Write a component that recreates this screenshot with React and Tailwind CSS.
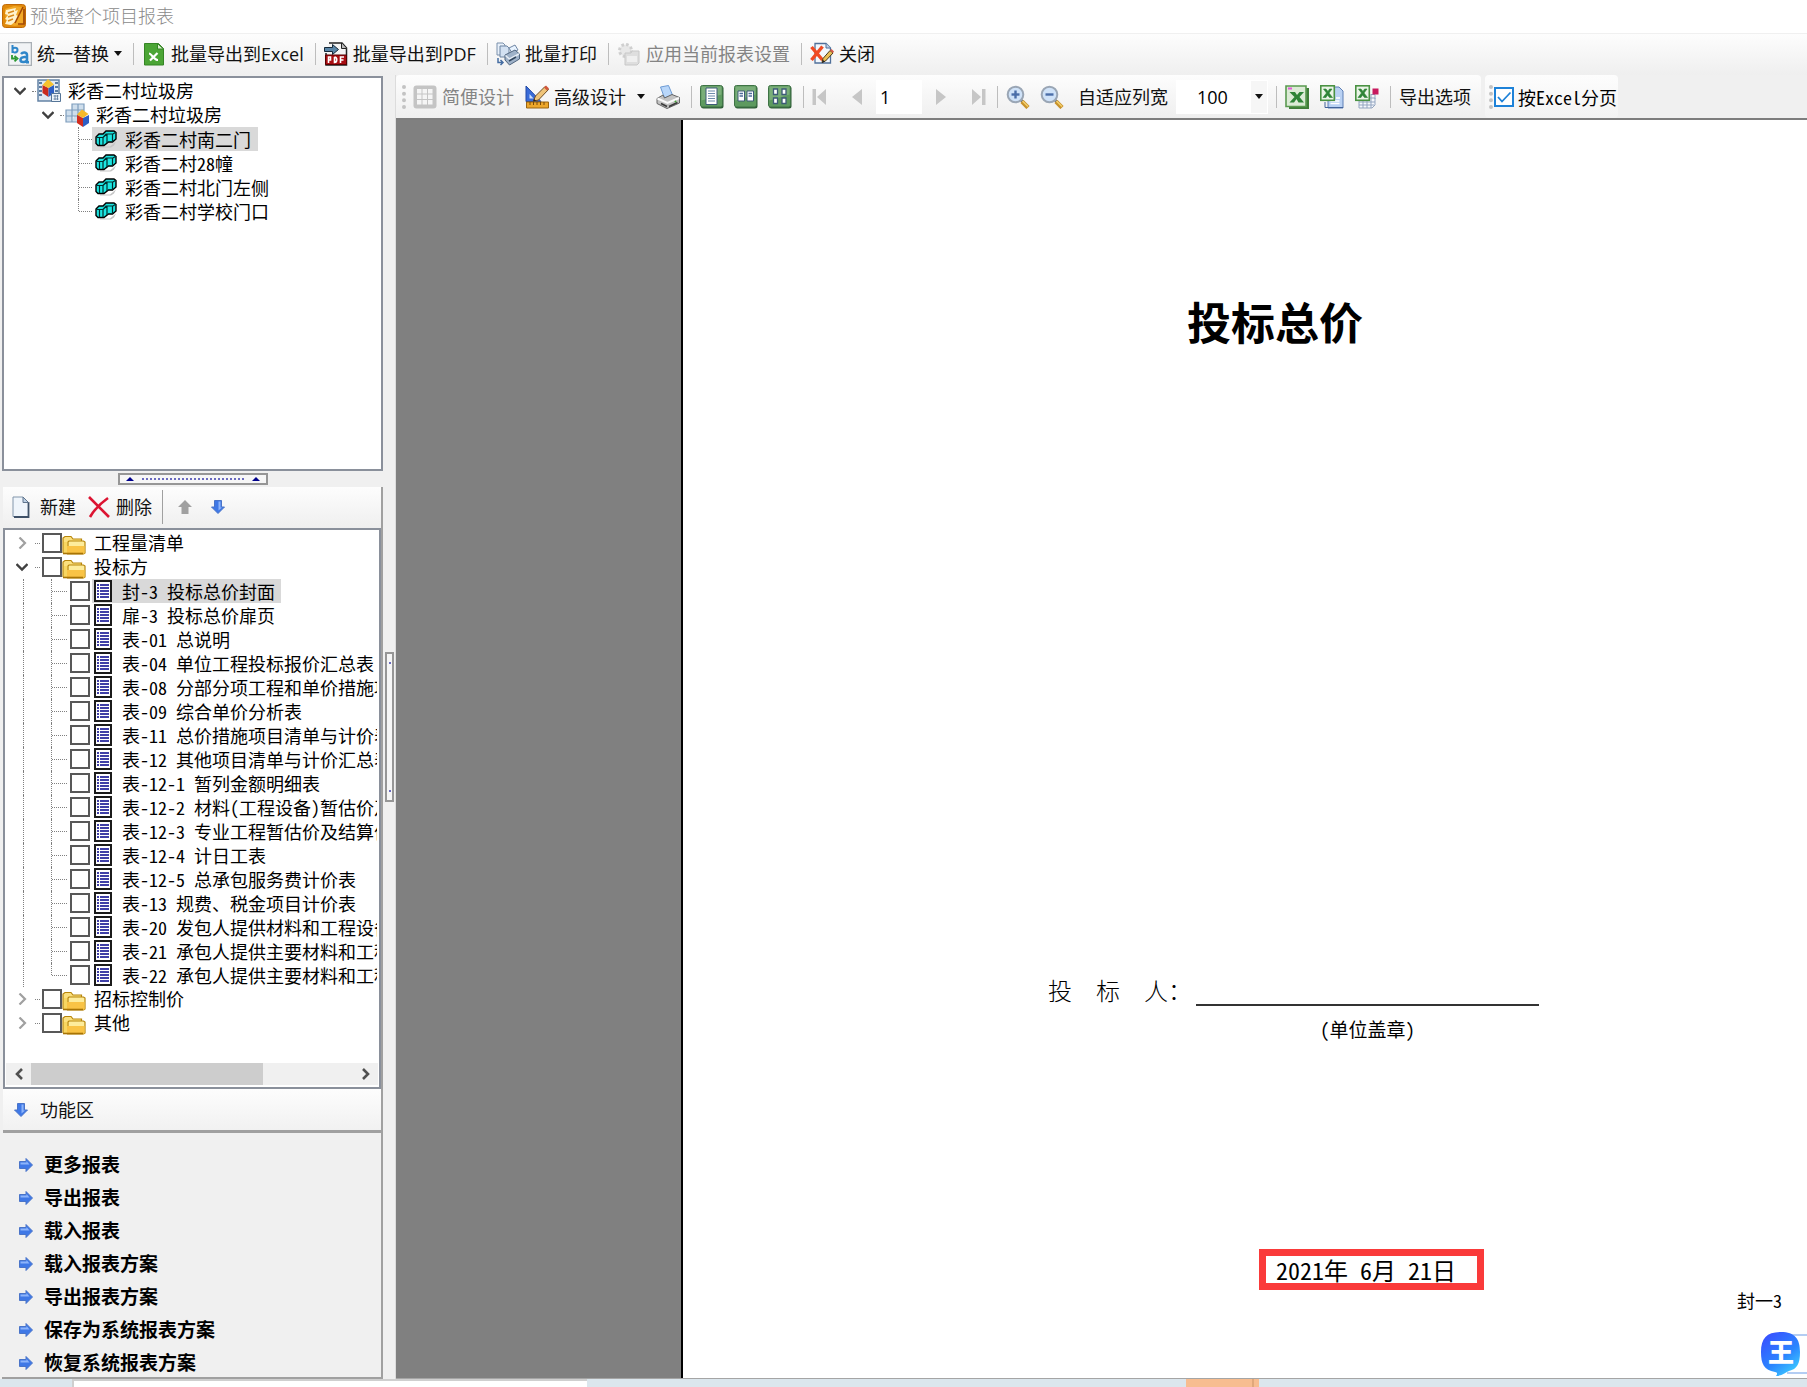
import React from "react";
import clsx from "clsx";

// --- Data ---
const rooms = ["彩香二村南二门", "彩香二村28幢", "彩香二村北门左侧", "彩香二村学校门口"];

const bidderReports = [
    "封-3 投标总价封面",
    "扉-3 投标总价扉页",
    "表-01 总说明",
    "表-04 单位工程投标报价汇总表",
    "表-08 分部分项工程和单价措施项目",
    "表-09 综合单价分析表",
    "表-11 总价措施项目清单与计价表",
    "表-12 其他项目清单与计价汇总表",
    "表-12-1 暂列金额明细表",
    "表-12-2 材料(工程设备)暂估价及",
    "表-12-3 专业工程暂估价及结算价",
    "表-12-4 计日工表",
    "表-12-5 总承包服务费计价表",
    "表-13 规费、税金项目计价表",
    "表-20 发包人提供材料和工程设备",
    "表-21 承包人提供主要材料和工程",
    "表-22 承包人提供主要材料和工程",
];

const actions = [
    "更多报表",
    "导出报表",
    "载入报表",
    "载入报表方案",
    "导出报表方案",
    "保存为系统报表方案",
    "恢复系统报表方案",
];

// Half-width characters take exactly half of a Chinese character
const HalfWidth = ({ text }) => (
    <span className="font-['Noto_Sans_Mono_CJK_SC','Noto_Sans_CJK_SC',monospace] whitespace-pre">{text}</span>
);

// --- Icons ---
const Svg = ({ className = "size-6", box = "0 0 24 24", children }) => (
    <svg viewBox={box} className={clsx("shrink-0", className)} aria-hidden="true">
        {children}
    </svg>
);

const LogoIcon = () => (
    <Svg>
        <rect x="0.5" y="0.5" width="23" height="23" rx="3" fill="#e08a0b" stroke="#c26a06" />
        <path d="M3 5l9-3 9 1v17l-8 2-9-2z" fill="#f2a928" />
        <path d="M4 6l10-2-1 3 3-1-2 5 2 1-2 5-5 4-6-1 2-4-2-1 3-4-3-1z" fill="#fff3cf" />
        <path d="M6 9l6-2M6 13l6-2M6 17l5-2" stroke="#d98a1c" strokeWidth="1.500" />
        <path d="M21 3l-8 16M22 5v15h-6" stroke="#a24806" strokeWidth="1.600" fill="none" />
    </Svg>
);

const ReplaceIcon = () => (
    <Svg>
        <rect x="0.5" y="0.5" width="23" height="23" fill="#f1f3f5" stroke="#a9afb5" strokeWidth="1.5" />
        <path d="M4.500 3v8M4.500 8c0-3 5-3 5 0s-5 3.500-5 0" stroke="#2f86c9" strokeWidth="2" fill="none" />
        <path d="M13 12c2-2.500 6-2 6 1v7M19 15.500c-3-1-6.500 0-6.500 2.500s5 3 6.500 0M18 20.200h3" stroke="#2f86c9" strokeWidth="2.500" fill="none" />
        <path d="M4 13v3.500h4M6.500 14l3 2.500-3 2.800" stroke="#2d9a32" strokeWidth="1.800" fill="none" />
    </Svg>
);

const ExcelFileIcon = () => (
    <Svg>
        <path d="M2.500 1.500h14l5 5V23h-19z" fill="#4ba535" stroke="#358525" />
        <path d="M15.500 1.500V7h6z" fill="#d8f0cd" stroke="#358525" />
        <path d="M7 11.500c2.500 0 5 6.500 9 6.500M15.500 11l-7.500 7.500" stroke="#fff" strokeWidth="2.200" fill="none" />
    </Svg>
);

const PdfIcon = () => (
    <Svg>
        <path d="M5 1h13l4.500 5v17H2V11" fill="#f4f4f4" stroke="#222" strokeWidth="1.500" />
        <path d="M17.500 1v5.500h5" fill="#bbb" stroke="#222" />
        <path d="M0.500 5.500h8V2.500l6 5-6 5V9.500h-8z" fill="#5a86a8" stroke="#152838" />
        <path d="M1.500 13h21v9.500h-21z" fill="#a80d12" stroke="#500" />
        <path d="M4.500 21v-6h2v3h-2M10.500 15v5.500c3 0 3-5.500 0-5.500M16.500 21v-6h3.500M16.500 18h3" stroke="#fff" strokeWidth="1.600" fill="none" />
    </Svg>
);

const BatchPrintIcon = () => (
    <Svg>
        <path d="M1 1h6l2 2v10H1z" fill="#e8f0fa" stroke="#7b90ab" />
        <path d="M4 4h7l2 2v9H4z" fill="#d3e1f2" stroke="#6d84a1" />
        <path d="M13 6l6-3 3 5-6 3z" fill="#e8f3ff" stroke="#6f86a4" />
        <path d="M9 13l10-5 4.500 4v5l-10 6L9 18z" fill="#9fb2c9" stroke="#50657f" />
        <path d="M9.500 13.500l4 3.500 9.500-5" stroke="#e6edf5" strokeWidth="1.500" fill="none" />
        <path d="M13 19l7-4" stroke="#33475f" strokeWidth="1.500" />
        <path d="M2 16v4.500h4M4.500 18l2.500 2.500L4.500 23" stroke="#456da2" strokeWidth="1.500" fill="none" />
    </Svg>
);

const ApplyIcon = () => (
    <Svg>
        <circle cx="8.500" cy="8.500" r="6" fill="#e8e8e8" stroke="#cfcfcf" strokeWidth="3" strokeDasharray="2.500 2.200" />
        <path d="M8 11h6l1-2h7v12l-2 2H8z" fill="#dedede" stroke="#c8c8c8" />
        <path d="M10 14h10v6H10z" fill="#efefef" />
    </Svg>
);

const CloseIcon = () => (
    <Svg>
        <path d="M5 1.500h11l4.500 4.500v15H5z" fill="#f3f7fc" stroke="#50709a" strokeWidth="1.300" />
        <path d="M16 1.500V6h4.500" fill="#bdd0e8" stroke="#50709a" />
        <path d="M1.500 5l11 13M12.500 4.500L1.500 18" stroke="#f04a22" strokeWidth="3.400" />
        <path d="M12 20.500l1-4 7-8 3 2.500-7.500 8z" fill="#e9be55" stroke="#4d3b18" />
        <path d="M12 21l1-3 2 1.500z" fill="#222" />
        <path d="M20 8.500l3 2.500 1-1.500-2.500-2.500z" fill="#d85b48" />
    </Svg>
);

const GridIcon = () => (
    <Svg>
        <rect x="0.500" y="0.500" width="23" height="23" rx="3" fill="#c4c4c4" />
        {[4, 9.5, 15].map((y) =>
            [4, 9.5, 15].map((x) => <rect key={x + "-" + y} x={x} y={y} width="4.500" height="4.500" fill="#f5f5f5" />)
        )}
    </Svg>
);

const RulerIcon = () => (
    <Svg>
        <path d="M1 1l15 15.500H1z" fill="#3a6cd8" stroke="#2149a6" />
        <path d="M4.500 9l4 4.500h-4z" fill="#cfe0fb" />
        <path d="M8.500 16l2-5L20 1.500l3.500 3L13.500 15z" fill="#efc479" stroke="#6d4d25" />
        <path d="M19 2.500l2-2 3 3-2 2z" fill="#d0553b" />
        <path d="M8 17l1-3 2 1.500z" fill="#222" />
        <path d="M1.500 17h22v6h-22z" fill="#eda72b" stroke="#9a6410" />
        <path d="M5 17v3M8.500 17v3M12 17v3M15.500 17v3M19 17v3" stroke="#7a4a08" />
    </Svg>
);

const PrinterIcon = () => (
    <Svg>
        <path d="M4.500 2l8-1.500L16.500 10l-8 3z" fill="#b9d7fa" stroke="#6d9bd4" />
        <path d="M1 13.500L7 10l1.500 3 7.500-3.500 7.500 3V18L11 23.500 1 18.500z" fill="#c3c3c3" stroke="#666" />
        <path d="M1.500 13.500l10 4.500 11.500-5" fill="none" stroke="#fafafa" strokeWidth="2" />
        <path d="M5 18.500l6 3M13 21.500l8.500-4" stroke="#3c3c3c" strokeWidth="1.800" />
        <circle cx="19.500" cy="16.500" r="1" fill="#48a63a" />
    </Svg>
);

// Green tile shared by the page layout buttons
const PageTile = ({ children }) => (
    <Svg>
        <rect x="1" y="1" width="22.500" height="22.500" rx="2.500" fill="#2c5c34" />
        <rect x="0.500" y="0.500" width="22" height="21.500" rx="2" fill="#5d9a5f" stroke="#3f7346" />
        <path d="M1.500 1.500h20v8l-20 6z" fill="#8dbd8b" opacity="0.600" />
        {children}
    </Svg>
);

const OnePageIcon = () => (
    <PageTile>
        <path d="M6 3h11v16.500H6z" fill="#fff" stroke="#3d5b78" />
        <path d="M8 6h7M8 8.500h7M8 11h7M8 13.500h7M8 16h7" stroke="#6d8bab" />
    </PageTile>
);

const TwoPageIcon = () => (
    <PageTile>
        <path d="M4 6h6.500v10H4zM13 6h6.500v10H13z" fill="#fff" stroke="#3d5b78" />
        <path d="M5.500 8.500H9M5.500 11H9M14.500 8.500H18M14.500 11H18" stroke="#4d6d9a" strokeWidth="1.300" />
    </PageTile>
);

const FourPageIcon = () => (
    <PageTile>
        <path d="M5.500 4h4v5.500h-4zM14 4h4v5.500h-4zM5.500 13h4v5.500h-4zM14 13h4v5.500h-4z" fill="#fff" stroke="#3d5b78" strokeWidth="1.300" />
    </PageTile>
);

const Magnifier = ({ plus }) => (
    <Svg>
        <path d="M14 14l4 4" stroke="#777" strokeWidth="3" />
        <path d="M16 16.500l6 6" stroke="#c8922c" strokeWidth="4.500" />
        <path d="M16.500 16l5.500 5.500" stroke="#f3d06c" strokeWidth="1.500" />
        <circle cx="9.500" cy="9.500" r="7.800" fill="#cfe2f8" stroke="#9aa6b5" strokeWidth="2" />
        <path d="M5.500 9.500h8" stroke="#4a6ea8" strokeWidth="2.400" />
        {plus && <path d="M9.500 5.500v8" stroke="#4a6ea8" strokeWidth="2.400" />}
    </Svg>
);

const ExcelIcon = () => (
    <Svg>
        <path d="M4 3h20v21H4z" fill="#3f7d38" />
        <path d="M1 1h20v20.500H1z" fill="#dcebd6" stroke="#5a9a50" strokeWidth="1.600" />
        <path d="M4.500 7H10l2 3 2.500-3H19l-4.500 5 4.500 5.500h-5.500L11.500 14 9 17.500H4.500l5-5.500z" fill="#2f8437" />
        <path d="M3 3.500h4" stroke="#e45ad8" strokeWidth="2" />
    </Svg>
);

const SmallExcel = () => (
    <>
        <rect x="0.800" y="0.800" width="13.500" height="14.500" fill="#eaf4e7" stroke="#4a9243" strokeWidth="1.600" />
        <path d="M3.500 4H6l2 2.500L9.500 4H12L9 8l3.500 4.500H9.500L7.500 10 6 12.500H3L6.500 8z" fill="#2f8437" stroke="#2f8437" strokeWidth="0.600" />
    </>
);

const ExcelPageIcon = () => (
    <Svg>
        <path d="M8 2h11l4 4v17H8z" fill="#b9d1f3" stroke="#5d7fb5" />
        <path d="M10.500 16h9M10.500 18.500h9M16 13h4" stroke="#fff" strokeWidth="1.500" />
        <path d="M5 17v5.500h18" stroke="#40629a" fill="none" />
        <SmallExcel />
    </Svg>
);

const ExcelGridIcon = () => (
    <Svg>
        <path d="M4 13h16v7l-3 3H4zM4 17h16M4 20h15M8 13v10M12 13v10M16 9v14M16 9.500h4V14" fill="#f5f8fc" stroke="#93a5c0" />
        <SmallExcel />
        <rect x="17.500" y="3.500" width="6" height="6" fill="#c81a5e" />
    </Svg>
);

const ProjectIcon = () => (
    <Svg>
        <path d="M1 1h21v21H1z" fill="#dfe8f2" stroke="#6483a5" strokeWidth="1.500" />
        <path d="M2 4h3M2 8h3M2 12h3M2 16h3M18 4h3M18 8h3M18 12h3" stroke="#5b7ca3" strokeWidth="2" />
        <path d="M5.500 6v8l6 4V9z" fill="#c92a1f" />
        <path d="M17 6v8l-5.500 4V9z" fill="#2e5fc4" />
        <path d="M11 0l6 5.500-5.500 3.500-6-3z" fill="#f6c12e" />
        <path d="M14.500 14.500h9v8h-9z" fill="#eef4fa" stroke="#557597" />
        <path d="M16.500 17h5M16.500 20h5M18 16v5M20.500 16v5" stroke="#557597" strokeWidth="0.800" />
    </Svg>
);

const BuildingIcon = () => (
    <Svg>
        <path d="M1 7h6V1h12v12H7v6H1zM7 7h12M7 7v6M13 1v18H7M1 13h12" fill="#cfdeec" stroke="#7e9dbd" strokeWidth="1.200" />
        <path d="M12 12v8l6 4v-9z" fill="#d22c1e" />
        <path d="M24 12v8l-6 4v-9z" fill="#2e5fc4" />
        <path d="M17 6.500l6.500 4.500-5.500 4-6-3.500z" fill="#f5b929" />
    </Svg>
);

const CubesIcon = () => (
    <Svg className="h-5 w-[22px]" box="0 0 22 20">
        <path d="M5 17.500h10l6-5-2 4-3 2H5z" fill="#c5c5c5" />
        <path d="M1 8l3-3h4l3-3h8l2 1.500V10l-3.500 3h-4L9 16.500H3L1 14.500z" fill="#1ce6e2" stroke="#000" strokeWidth="1.400" />
        <path d="M1.500 8.500H8l3-3.500h7M8 8.500V16M12 5v9M17.500 5.500V13M4.500 9v7M18 5l3-2M8 8.500L11.500 5" stroke="#022f2f" strokeWidth="1.200" fill="none" />
    </Svg>
);

const FolderIcon = () => (
    <Svg>
        <path d="M1 20V5L3 3.500h6L11 6h8.500v4" fill="#fbe07e" stroke="#b8860b" strokeWidth="1.200" />
        <path d="M6 20.500V9L7 8h14.500L23 9v11l-1.500 1H5z" fill="#fdec9c" stroke="#b8860b" strokeWidth="1.200" />
        <path d="M2 20.500V9h3v11.500z" fill="#f7d661" />
        <path d="M5 13h17.500v7.500H5z" fill="#f9c345" />
        <path d="M1 20.500h20" stroke="#a87405" strokeWidth="1.600" />
    </Svg>
);

const ReportIcon = () => (
    <Svg className="h-[22px] w-[18px]" box="0 0 18 22">
        <rect x="1" y="1" width="16" height="20" fill="#fff" stroke="#1b1b1b" strokeWidth="2" />
        <path d="M3 5h2M3 8h2M3 11h2M3 14h2M3 17h2M6 5h9M6 8h9M6 11h9M6 14h9M6 17h9" stroke="#00008b" strokeWidth="1.500" />
    </Svg>
);

const NewFileIcon = () => (
    <Svg className="h-6 w-[18px]" box="0 0 18 24">
        <path d="M1 2h10l5.500 5.500v14H1z" fill="#eff5fb" stroke="#8296ab" />
        <path d="M16.500 7v15H2" stroke="#3e5168" strokeWidth="1.800" fill="none" />
        <path d="M11 2v5.500h5.500z" fill="#bdd0e4" stroke="#60758d" />
    </Svg>
);

const DeleteIcon = () => (
    <Svg>
        <path d="M2 2c6 6 13 13 20 20M21 3C14 8 7 15 3 22" stroke="#dc1432" strokeWidth="2.600" fill="none" />
    </Svg>
);

const BlueArrow = ({ className }) => (
    <Svg className={clsx("size-[14px]", className)} box="0 0 14 14">
        <path d="M0.500 3.500H7V0.500L13.500 7 7 13.500v-3H0.500z" fill="#3f78e6" stroke="#4a74c8" />
        <path d="M1.500 4.500h6V3l3 3.500h-9z" fill="#8db4fa" />
    </Svg>
);

const Caret = () => (
    <Svg className="h-[5px] w-2" box="0 0 8 5">
        <path d="M0 0h8L4 5z" fill="#111" />
    </Svg>
);

const Expander = ({ open, className }) => (
    <Svg className={clsx("size-3", className)} box="0 0 12 12">
        {open ? (
            <path d="M0.500 3L6 8.500 11.500 3" stroke="#404040" strokeWidth="2.400" fill="none" />
        ) : (
            <path d="M3.500 0.500L9 6l-5.500 5.500" stroke="#a0a0a0" strokeWidth="2.200" fill="none" />
        )}
    </Svg>
);

// --- Toolbar parts ---
const Separator = () => <span className="mr-2 ml-[11px] h-[22px] w-px shrink-0 bg-[#bdbdbd]" />;

const Grip = () => <span className="h-6 w-0 shrink-0 border-l-4 border-dotted border-[#c3c3c3]" />;

const ToolButton = ({ icon, label, disabled, caret }) => (
    <button
        type="button"
        disabled={disabled}
        className={clsx("flex shrink-0 items-center gap-[5px] whitespace-nowrap", disabled ? "text-[#848484]" : "text-[#111]")}
    >
        {icon}
        {label}
        {caret && <Caret />}
    </button>
);

const IconButton = ({ label, disabled, children }) => (
    <button type="button" aria-label={label} disabled={disabled} className="flex shrink-0 items-center justify-center">
        {children}
    </button>
);

const NavArrow = ({ back, edge }) => (
    <Svg className="h-5 w-[14px]" box="0 0 14 20">
        <g fill="#c6c6c6" transform={back ? "translate(14 0) scale(-1 1)" : undefined}>
            <path d={edge ? "M0 2l9 8-9 8z" : "M2 2l10 8-10 8z"} />
            {edge && <path d="M10 2h3.500v16H10z" />}
        </g>
    </Svg>
);

const TreeCheckbox = ({ label }) => (
    <input
        type="checkbox"
        aria-label={label}
        className="size-5 shrink-0 appearance-none border-2 border-[#585858] bg-white"
    />
);

const Dots = ({ className }) => <span className={clsx("shrink-0 border-t border-dotted border-[#808080]", className)} />;

const MainToolbar = () => (
    <div className="flex h-[41px] shrink-0 items-center bg-linear-to-b from-[#fdfdfd] to-[#efefef] pb-0.5 pl-2">
        <ToolButton icon={<ReplaceIcon />} label="统一替换" caret />
        <Separator />
        <ToolButton icon={<ExcelFileIcon />} label="批量导出到Excel" />
        <Separator />
        <ToolButton icon={<PdfIcon />} label="批量导出到PDF" />
        <Separator />
        <ToolButton icon={<BatchPrintIcon />} label="批量打印" />
        <Separator />
        <ToolButton icon={<ApplyIcon />} label="应用当前报表设置" disabled />
        <Separator />
        <ToolButton icon={<CloseIcon />} label="关闭" />
    </div>
);

const PreviewToolbar = () => (
    <div className="flex h-[45px] shrink-0 gap-1 border-b-2 border-[#7d7d7d] bg-[#f0f0f0]">
        <div className="flex items-center rounded bg-linear-to-b from-[#fdfdfd] to-[#efefef] pr-[10px] pl-[6px]">
            <Grip />
            <div className="flex items-center gap-[11px] pl-[7px]">
                <ToolButton icon={<GridIcon />} label="简便设计" disabled />
                <ToolButton icon={<RulerIcon />} label="高级设计" />
                <IconButton label="设计选项">
                    <Caret />
                </IconButton>
                <IconButton label="打印">
                    <PrinterIcon />
                </IconButton>
            </div>
            <Separator />
            <div className="flex items-center gap-[10px]">
                <IconButton label="单页">
                    <OnePageIcon />
                </IconButton>
                <IconButton label="双页">
                    <TwoPageIcon />
                </IconButton>
                <IconButton label="四页">
                    <FourPageIcon />
                </IconButton>
            </div>
            <Separator />
            <div className="flex items-center gap-3">
                <div className="flex items-center gap-6">
                    <IconButton label="首页" disabled>
                        <NavArrow back edge />
                    </IconButton>
                    <IconButton label="上一页" disabled>
                        <NavArrow back />
                    </IconButton>
                </div>
                <input aria-label="页码" defaultValue="1" className="h-[34px] w-[46px] bg-white pl-1 outline-none" />
                <div className="flex items-center gap-6">
                    <IconButton label="下一页" disabled>
                        <NavArrow />
                    </IconButton>
                    <IconButton label="末页" disabled>
                        <NavArrow edge />
                    </IconButton>
                </div>
            </div>
            <Separator />
            <div className="flex items-center gap-[10px]">
                <IconButton label="放大">
                    <Magnifier plus />
                </IconButton>
                <IconButton label="缩小">
                    <Magnifier />
                </IconButton>
            </div>
            <div className="flex items-center gap-2 pl-[14px]">
                <ToolButton label="自适应列宽" />
                <div className="relative">
                    <select
                        aria-label="缩放比例"
                        defaultValue="100"
                        className="h-[34px] w-[92px] appearance-none bg-white pl-[21px] outline-none"
                    >
                        <option>50</option>
                        <option>100</option>
                        <option>200</option>
                    </select>
                    <span className="pointer-events-none absolute inset-y-px right-px flex w-4 items-center justify-center bg-[#f6f6f6]">
                        <Caret />
                    </span>
                </div>
            </div>
            <span className="mx-2 h-[22px] w-px shrink-0 bg-[#bdbdbd]" />
            <div className="flex items-center gap-[11px]">
                <IconButton label="导出Excel">
                    <ExcelIcon />
                </IconButton>
                <IconButton label="导出Excel文件">
                    <ExcelPageIcon />
                </IconButton>
                <IconButton label="导出到表格">
                    <ExcelGridIcon />
                </IconButton>
            </div>
            <Separator />
            <ToolButton label="导出选项" />
        </div>
        <div className="flex items-center rounded bg-linear-to-b from-[#fdfdfd] to-[#f3f3f3] pr-px pl-1">
            <Grip />
            <label className="flex items-center gap-1 pl-px whitespace-nowrap text-black">
                <span className="relative flex">
                    <input
                        type="checkbox"
                        defaultChecked
                        className="peer size-5 appearance-none border-2 border-[#1e82d8] bg-white"
                    />
                    <svg
                        viewBox="0 0 20 20"
                        className="pointer-events-none absolute inset-0 hidden size-5 peer-checked:block"
                        aria-hidden="true"
                    >
                        <path d="M4 10l4 4.500L16.500 5.500" stroke="#1e82d8" strokeWidth="1.800" fill="none" />
                    </svg>
                </span>
                <HalfWidth text="按Excel分页" />
            </label>
        </div>
    </div>
);

const ProjectTree = () => (
    <div className="h-[395px] shrink-0 overflow-hidden border-2 border-[#8a909b] bg-white pt-px text-black">
        <div className="flex h-6 items-center">
            <Expander open className="mr-[5px] ml-[10px]" />
            <Dots className="mr-px ml-px w-1" />
            <ProjectIcon />
            <span className="pl-[7px]">彩香二村垃圾房</span>
        </div>
        <div className="flex h-6 items-center">
            <Expander open className="mr-[5px] ml-[38px]" />
            <Dots className="mr-px ml-px w-1" />
            <BuildingIcon />
            <span className="pl-[7px]">彩香二村垃圾房</span>
        </div>
        {rooms.map((room, i) => (
            <div key={room} className="flex h-6 items-center pl-[74px]">
                <span
                    className={clsx(
                        "self-start border-l border-dotted border-[#808080]",
                        i === rooms.length - 1 ? "h-3" : "h-6"
                    )}
                />
                <Dots className="w-[13px]" />
                <span className={clsx("flex h-6 items-center gap-2 pr-[7px] pl-[3px]", i === 0 && "bg-[#d9d9d9]")}>
                    <CubesIcon />
                    <HalfWidth text={room} />
                </span>
            </div>
        ))}
    </div>
);

const FolderRow = ({ label, open }) => (
    <div className="flex h-6 items-center">
        <Expander open={open} className="mr-[7px] ml-[11px]" />
        <Dots className="mr-0.5 w-[5px]" />
        <TreeCheckbox label={label} />
        <span className="pt-1">
            <FolderIcon />
        </span>
        <span className="pl-2">{label}</span>
    </div>
);

const ReportTree = () => (
    <div className="flex min-h-0 flex-1 flex-col border-2 border-[#8a909b] bg-white text-black">
        <div className="mr-0.5 min-h-0 flex-1 overflow-hidden pt-px whitespace-nowrap">
            <FolderRow label="工程量清单" />
            <FolderRow label="投标方" open />
            {bidderReports.map((report, i) => (
                <div key={report} className="flex h-6 items-center pl-[18px]">
                    <span className="h-6 w-7 shrink-0 border-l border-dotted border-[#808080]" />
                    <span
                        className={clsx(
                            "shrink-0 self-start border-l border-dotted border-[#808080]",
                            i === bidderReports.length - 1 ? "h-3" : "h-6"
                        )}
                    />
                    <Dots className="mr-[3px] w-[15px]" />
                    <TreeCheckbox label={report} />
                    <span className={clsx("ml-0.5 flex h-6 items-center gap-[10px] pr-1.5 pl-0.5", i === 0 && "bg-[#d9d9d9]")}>
                        <ReportIcon />
                        <HalfWidth text={report} />
                    </span>
                </div>
            ))}
            <FolderRow label="招标控制价" />
            <FolderRow label="其他" />
        </div>
        <div className="mx-px mb-0.5 flex h-[22px] shrink-0 items-center bg-[#f0f0f0]">
            <button type="button" aria-label="向左滚动" className="flex w-[25px] justify-center">
                <Svg className="size-3" box="0 0 12 12">
                    <path d="M9 1L4 6l5 5" stroke="#505050" strokeWidth="2.600" fill="none" />
                </Svg>
            </button>
            <div className="h-full flex-1">
                <div className="h-full w-[72%] bg-[#cdcdcd]" />
            </div>
            <button type="button" aria-label="向右滚动" className="flex w-[25px] justify-center">
                <Svg className="size-3" box="0 0 12 12">
                    <path d="M3 1l5 5-5 5" stroke="#505050" strokeWidth="2.600" fill="none" />
                </Svg>
            </button>
        </div>
    </div>
);

const Sidebar = () => (
    <aside className="flex w-[383px] shrink-0 flex-col bg-[#f0f0f0] pt-px pl-0.5">
        <ProjectTree />

        {/* Collapse handle */}
        <div className="flex h-4 shrink-0 items-center justify-center">
            <button
                type="button"
                aria-label="折叠"
                className="flex h-3 w-[150px] items-center justify-center gap-2 border-2 border-[#969696] bg-[#f6f6f6]"
            >
                <Svg className="h-1 w-2" box="0 0 8 4">
                    <path d="M0 4h8L4 0z" fill="#00008b" />
                </Svg>
                <span className="w-[102px] border-t-2 border-dotted border-[#6a6ac0]" />
                <Svg className="h-1 w-2" box="0 0 8 4">
                    <path d="M0 4h8L4 0z" fill="#00008b" />
                </Svg>
            </button>
        </div>

        <div className="flex min-h-0 flex-1 flex-col border-r-2 border-b-2 border-[#a0a0a0] pl-px">
            <div className="flex h-[41px] shrink-0 items-center bg-linear-to-b from-[#fdfdfd] to-[#efefef] pb-px pl-[9px]">
                <ToolButton icon={<NewFileIcon />} label={<span className="pl-[5px]">新建</span>} />
                <span className="w-[11px]" />
                <ToolButton icon={<DeleteIcon />} label="删除" />
                <span className="ml-[10px] h-[34px] w-px bg-[#a0a0a0]" />
                <div className="flex items-center gap-[19px] pl-[15px]">
                    <IconButton label="上移" disabled>
                        <Svg className="size-[14px]" box="0 0 14 14">
                            <path d="M7 0l7 7h-3.500v7h-7V7H0z" fill="#a0a0a0" />
                        </Svg>
                    </IconButton>
                    <IconButton label="下移">
                        <BlueArrow className="rotate-90" />
                    </IconButton>
                </div>
            </div>
            <ReportTree />
            <button
                type="button"
                className="flex h-[41px] shrink-0 items-center gap-3 bg-linear-to-b from-[#fdfdfd] to-[#f1f1f1] pl-[11px] text-[#111]"
            >
                <BlueArrow className="rotate-90" />
                功能区
            </button>
            <nav className="h-[247px] shrink-0 border-t-3 border-[#a0a0a0] pt-[15px] text-[19px] font-bold text-black">
                {actions.map((action) => (
                    <a key={action} href="#" className="flex h-[33px] items-center gap-[11px] pl-4">
                        <BlueArrow />
                        {action}
                    </a>
                ))}
            </nav>
        </div>
    </aside>
);

const Page = () => (
    <div className="flex-1 overflow-hidden border-l-2 border-black bg-white pt-[173px] text-black">
        <h1 className="pl-[60px] text-center text-[44px] leading-[60px] font-semibold">投标总价</h1>
        <div className="mt-[623px] ml-[365px] flex h-[30px] w-[491px] text-2xl leading-[30px] font-light">
            <span className="w-[148px] whitespace-nowrap">投　标　人：</span>
            <span className="flex-1 border-b-2 border-[#333]" />
        </div>
        <p className="mt-[11px] ml-[513px] w-[343px] text-center text-[19px] leading-6">
            <HalfWidth text="(单位盖章)" />
        </p>
        <div className="mt-[207px] ml-[576px] flex h-[41px] w-[225px] items-center border-7 border-[#fa3a3a] pl-[10px] text-2xl font-light">
            <HalfWidth text="2021年 6月 21日" />
        </div>
        <p className="pr-[25px] text-right leading-5">
            <HalfWidth text="封一3" />
        </p>
    </div>
);

const App = () => (
    <div className="relative flex h-screen flex-col overflow-hidden bg-[#f0f0f0] font-['Open_Sans','Noto_Sans_CJK_SC',sans-serif] text-[18px] leading-6">
        <header className="flex h-[34px] shrink-0 items-center gap-1 border-b border-[#f0f0f0] bg-white pb-0.5 pl-0.5 text-[#8a8a8a]">
            <LogoIcon />
            <span className="font-light">预览整个项目报表</span>
        </header>
        <MainToolbar />

        <div className="flex min-h-0 flex-1">
            <Sidebar />
            <div className="flex w-[13px] shrink-0 flex-col items-center border-r border-[#dcdcdc] pt-[577px] pl-px">
                <button
                    type="button"
                    aria-label="折叠侧栏"
                    className="flex h-[150px] w-[9px] flex-col items-center justify-between border-2 border-[#969696] bg-[#f6f6f6] py-2"
                >
                    <span className="size-0.5 bg-[#6a6ac0]" />
                    <span className="size-0.5 bg-[#6a6ac0]" />
                </button>
            </div>
            <main className="flex min-w-0 flex-1 flex-col">
                <PreviewToolbar />
                <div className="flex min-h-0 flex-1 border-b border-[#a5a5a5] bg-[#808080] pl-[285px]">
                    <Page />
                </div>
            </main>
        </div>

        {/* Desktop strip under the window */}
        <footer className="flex h-2 shrink-0 bg-[#dbe6ed]">
            <span className="ml-[72px] w-[515px] border-t-2 border-l-2 border-[#cfcfcf] bg-white" />
            <span className="ml-[599px] w-[73px] bg-[#f7bd90]">
                <span className="ml-[66px] block h-full w-0.5 bg-[#e0a87b]" />
            </span>
        </footer>

        {/* Input method badge floating over the window */}
        <div className="absolute right-0 bottom-[11px] flex h-11 w-[46px]">
            <span className="absolute top-0.5 right-0 h-10 w-5 border-y-2 border-[#b4cdf3] bg-white" />
            <svg viewBox="0 0 40 44" className="relative h-11 w-10" aria-hidden="true">
                <defs>
                    <linearGradient id="badge" x1="0.100" y1="0" x2="0.800" y2="1">
                        <stop offset="0" stopColor="#3a4cff" />
                        <stop offset="0.600" stopColor="#2b86ff" />
                        <stop offset="1" stopColor="#3fd0ff" />
                    </linearGradient>
                </defs>
                <path d="M20 0C34 0 39 7 39 20c0 12-3 17-11 19-3 1-7 5-13 5 2-2 1-4-1-4C3 38 0 32 0 20 0 6 6 0 20 0z" fill="url(#badge)" />
            </svg>
            <span className="absolute inset-y-0 left-0 flex w-10 items-center justify-center pb-1 text-[26px] font-black text-white">
                王
            </span>
        </div>
    </div>
);

export default App;
